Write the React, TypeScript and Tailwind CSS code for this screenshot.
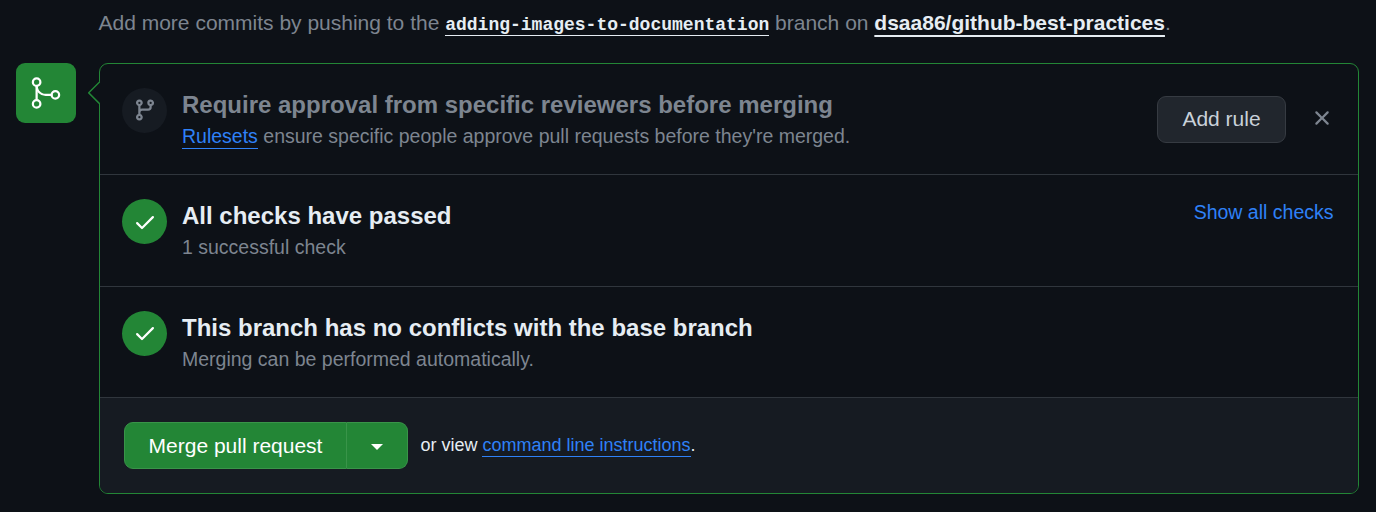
import type { ReactNode } from "react";
import { GoGitMerge } from "react-icons/go";

const CHECK =
  "M13.78 4.22a.75.75 0 0 1 0 1.06l-7.25 7.25a.75.75 0 0 1-1.06 0L2.22 9.28a.751.751 0 0 1 .018-1.042.751.751 0 0 1 1.042-.018L6 10.94l6.72-6.72a.75.75 0 0 1 1.06 0Z";
const BRANCH =
  "M9.5 3.25a2.25 2.25 0 1 1 3 2.122V6A2.5 2.5 0 0 1 10 8.5H6a1 1 0 0 0-1 1v1.128a2.251 2.251 0 1 1-1.5 0V5.372a2.25 2.25 0 1 1 1.5 0v1.836A2.493 2.493 0 0 1 6 7h4a1 1 0 0 0 1-1v-.628A2.25 2.25 0 0 1 9.5 3.25Zm-6 0a.75.75 0 1 0 1.5 0 .75.75 0 0 0-1.5 0Zm8.25-.75a.75.75 0 1 0 0 1.5.75.75 0 0 0 0-1.5ZM4.25 12a.75.75 0 1 0 0 1.5.75.75 0 0 0 0-1.5Z";
const CLOSE =
  "M3.72 3.72a.75.75 0 0 1 1.06 0L8 6.94l3.22-3.22a.749.749 0 0 1 1.275.326.749.749 0 0 1-.215.734L9.06 8l3.22 3.22a.749.749 0 0 1-.326 1.275.749.749 0 0 1-.734-.215L8 9.06l-3.22 3.22a.751.751 0 0 1-1.042-.018.751.751 0 0 1-.018-1.042L6.94 8 3.72 4.78a.75.75 0 0 1 0-1.06Z";

function Icon({ path }: { path: string }) {
  return (
    <svg viewBox="0 0 16 16" className="size-6 fill-current" aria-hidden="true">
      <path d={path} />
    </svg>
  );
}

function Row({
  icon,
  iconPadding = "pb-px",
  muted = false,
  title,
  className,
  children,
  action,
}: {
  icon: string;
  iconPadding?: string;
  muted?: boolean;
  title: string;
  className: string;
  children: ReactNode;
  action?: ReactNode;
}) {
  return (
    <section className={`flex border-b border-[#30363d] pl-[22px] pt-6 ${className}`}>
      <div
        className={`mr-[15px] flex size-[45px] shrink-0 items-center justify-center rounded-full ${iconPadding} ${
          muted ? "bg-[#161b22] text-[#7d8590]" : "bg-[#238636] text-white"
        }`}
      >
        <Icon path={icon} />
      </div>
      <div className="flex-1">
        <h3
          className={`text-[24px] leading-[33px] font-bold ${muted ? "text-[#7d8590]" : "text-[#e6edf3]"}`}
        >
          {title}
        </h3>
        <p className="text-[19.5px] leading-[30px] text-[#7d8590]">{children}</p>
      </div>
      {action}
    </section>
  );
}

export default function App() {
  return (
    <main className="h-[512px] w-[1376px] overflow-hidden bg-[#0d1117] font-['Liberation_Sans',Arial,sans-serif] text-[#e6edf3]">
      <p className="h-[63px] pt-[7px] pl-[98.5px] text-[21px] leading-[32px] whitespace-nowrap text-[#7d8590]">
        Add more commits by pushing to the{" "}
        <a className="border-b border-[#e6edf3] font-['Liberation_Mono',monospace] text-[18px] font-bold text-[#e6edf3]">
          adding-images-to-documentation
        </a>{" "}
        branch on{" "}
        <a className="font-bold text-[#e6edf3] underline decoration-2 underline-offset-[5px] [text-decoration-skip-ink:none]">
          dsaa86/github-best-practices
        </a>
        .
      </p>

      <div className="flex pl-4">
        <div className="mr-[23px] flex size-[60px] shrink-0 items-center justify-center rounded-[9px] bg-[#238636] text-white">
          <GoGitMerge className="size-9" />
        </div>

        <div className="relative h-[431px] w-[1260px] rounded-[9px] border border-[#238636]">
          <svg
            viewBox="0 0 12 24"
            className="absolute top-[17px] -left-[12px] h-6 w-3"
            aria-hidden="true"
          >
            <path d="M12 0.5L0.7 11.8L12 23.1Z" fill="#0d1117" />
            <path d="M11.8 0.7L0.7 11.8L11.8 22.9" fill="none" stroke="#238636" strokeWidth="1.5" />
          </svg>

          <Row
            icon={BRANCH}
            muted
            title="Require approval from specific reviewers before merging"
            className="h-[111px]"
            action={
              <div className="flex items-start pt-2 pr-6">
                <button className="h-[47px] w-[129px] rounded-[9px] border border-[#363b42] bg-[#21262d] pb-0.5 text-[21px] text-[#c9d1d9]">
                  Add rule
                </button>
                <button className="ml-6 flex h-11 w-6 items-center justify-center text-[#7d8590]">
                  <Icon path={CLOSE} />
                </button>
              </div>
            }
          >
            <a className="border-b border-[#2f81f7] pb-px text-[#2f81f7]">Rulesets</a> ensure specific
            people approve pull requests before they're merged.
          </Row>

          <Row
            icon={CHECK}
            iconPadding="pt-px"
            title="All checks have passed"
            className="h-[112px]"
            action={
              <a className="pr-[24.5px] text-[19.5px] leading-[27px] text-[#2f81f7]">Show all checks</a>
            }
          >
            1 successful check
          </Row>

          <Row
            icon={CHECK}
            title="This branch has no conflicts with the base branch"
            className="h-[111px]"
          >
            Merging can be performed automatically.
          </Row>

          <footer className="flex h-[95px] rounded-b-[8px] bg-[#161b22] pt-6 pl-6">
            <div className="flex h-[47px] text-[21px] text-white">
              <button className="w-[223px] rounded-l-[9px] border border-[#399449] bg-[#238636]">
                Merge pull request
              </button>
              <button className="flex w-[61px] items-center justify-center rounded-r-[9px] border border-l-0 border-[#399449] bg-[#238636]">
                <span className="mt-[2px] border-x-6 border-t-6 border-x-transparent border-t-white" />
              </button>
            </div>
            <p className="pl-[12.4px] text-[18px] leading-[46px]">
              or view{" "}
              <a className="border-b border-[#2f81f7] pb-px text-[#2f81f7]">command line instructions</a>.
            </p>
          </footer>
        </div>
      </div>
    </main>
  );
}
